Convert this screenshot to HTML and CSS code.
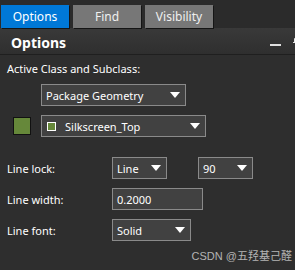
FILE: index.html
```html
<!DOCTYPE html>
<html>
<head>
<meta charset="utf-8">
<link rel="stylesheet" href="styles.css">
</head>
<body>
<div class="panel">
  <div class="tabs">
    <div class="tab active">Options</div>
    <div class="tab">Find</div>
    <div class="tab">Visibility</div>
  </div>
  <div class="header">
    <span class="title">Options</span>
    <span class="hicons">
      <span class="minbar"></span>
      <svg class="pin" width="8" height="10" viewBox="0 0 8 10"><path d="M1.5 1.5h6v4h-6z M0 5.5h8 M1.5 3.5h6" fill="none" stroke="#e6e6e6" stroke-width="1"/></svg>
    </span>
  </div>
  <div class="content">
    <div class="section-label">Active Class and Subclass:</div>
    <div class="row-class">
      <div class="select w-class"><span class="val">Package Geometry</span><span class="arrow"></span></div>
    </div>
    <div class="row-sub">
      <span class="swatch"></span>
      <div class="select w-sub"><span class="mini"></span><span class="val sub">Silkscreen_Top</span><span class="arrow"></span></div>
    </div>
    <div class="fields">
      <div class="field">
        <span class="lbl">Line lock:</span>
        <div class="select w-lock"><span class="val">Line</span><span class="arrow"></span></div>
        <div class="select w-angle"><span class="val">90</span><span class="arrow"></span></div>
      </div>
      <div class="field">
        <span class="lbl">Line width:</span>
        <div class="input w-width"><span class="val">0.2000</span></div>
      </div>
      <div class="field">
        <span class="lbl">Line font:</span>
        <div class="select w-font"><span class="val">Solid</span><span class="arrow"></span></div>
      </div>
    </div>
  </div>
  <div class="watermark">CSDN @五羟基己醛</div>
</div>
</body>
</html>
```
FILE: styles.css
```css
html, body {
  margin: 0;
  padding: 0;
  background: #2d2d2d;
}
.panel {
  position: relative;
  width: 295px;
  height: 270px;
  overflow: hidden;
  background: #2e2e2e;
  font-family: "Noto Sans", "Open Sans", sans-serif;
  font-size: 11px;
  color: #ffffff;
}
.tabs {
  display: flex;
  gap: 4px;
  height: 28px;
  box-sizing: border-box;
  padding: 5px 0 0 1px;
  background: #2b2b2b;
}
.tab {
  width: 68px;
  height: 23px;
  background: #777777;
  color: #f0f0f0;
  font-size: 12px;
  display: flex;
  align-items: center;
  justify-content: center;
  box-shadow: 1px 1px 0 #151515;
}
.tab.active {
  background: #0078d7;
  color: #ffffff;
}
.header {
  height: 26px;
  display: flex;
  align-items: center;
  justify-content: space-between;
  padding-left: 11px;
  background: linear-gradient(#393939, #2f2f2f);
  border-bottom: 1px solid #1f1f1f;
}
.title {
  font-weight: bold;
  font-size: 14px;
  margin-top: 2px;
}
.hicons {
  display: flex;
  align-items: center;
  gap: 12px;
  margin-right: -6px;
  margin-top: 2px;
}
.minbar {
  width: 11px;
  height: 2px;
  background: #e0e0e0;
  margin-top: 5px;
}
.content {
  padding: 7px 0 0 7px;
}
.section-label {
  height: 13px;
  line-height: 13px;
}
.row-class {
  margin-top: 9px;
  padding-left: 34px;
}
.row-sub {
  display: flex;
  align-items: center;
  margin-top: 9px;
}
.swatch {
  width: 16px;
  height: 16px;
  background: #66883a;
  border: 1px solid #111111;
  margin-left: 6px;
  margin-right: 10px;
}
.select, .input {
  position: relative;
  display: flex;
  align-items: center;
  box-sizing: border-box;
  background: #414141;
  border: 1px solid #8a8a8a;
  padding-left: 4px;
}
.w-class { width: 145px; height: 22px; }
.w-sub { width: 165px; height: 22px; }
.w-lock { width: 55px; height: 22px; }
.w-angle { width: 55px; height: 22px; margin-left: 31px; }
.w-width { width: 91px; height: 22px; }
.w-font { width: 79px; height: 22px; }
.val {
  white-space: nowrap;
}
.val.sub {
  margin-left: 9px;
}
.mini {
  width: 7px;
  height: 7px;
  background: #66883a;
  border: 1px solid #ffffff;
  margin-left: 1px;
}
.arrow {
  position: absolute;
  right: 5px;
  top: 7px;
  width: 0;
  height: 0;
  border-left: 5px solid transparent;
  border-right: 5px solid transparent;
  border-top: 6px solid #ffffff;
}
.fields {
  margin-top: 20px;
  display: flex;
  flex-direction: column;
  gap: 9px;
}
.field {
  display: flex;
  align-items: center;
}
.lbl {
  width: 105px;
}
.watermark {
  position: absolute;
  right: 3px;
  bottom: 7px;
  font-family: "Liberation Sans", "Noto Sans CJK SC", sans-serif;
  font-size: 11px;
  color: #b4b4b4;
}
```
